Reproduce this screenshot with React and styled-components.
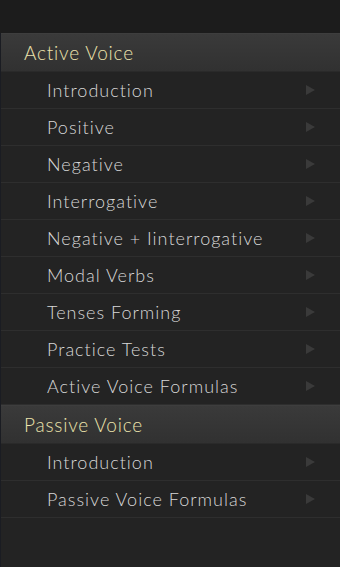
import React from "react";
import styled, { createGlobalStyle } from "styled-components";

const GlobalStyle = createGlobalStyle`
  html, body {
    margin: 0;
    padding: 0;
    background: #232323;
  }
  #root {
    min-height: 100vh;
  }
`;

const Page = styled.div`
  width: 340px;
  height: 567px;
  display: flex;
  flex-direction: column;
  background: #232323;
  overflow: hidden;
`;

const TopBar = styled.div`
  height: 33px;
  background: #1c1c1c;
  flex-shrink: 0;
`;

const Menu = styled.div`
  flex: 1;
  display: flex;
  flex-direction: column;
  border-left: 1px solid #1a1c22;
  background: #232323;
`;

const Header = styled.div`
  height: 39px;
  flex-shrink: 0;
  display: flex;
  align-items: center;
  padding-left: 23px;
  padding-bottom: 1px;
  box-sizing: border-box;
  background: linear-gradient(#3a3a3a, #313131);
  border-top: 1px solid #3e3e3e;
  border-bottom: 1px solid #2a2a2a;
  font-family: "Lato", "Noto Sans", sans-serif;
  font-weight: 300;
  font-size: 19px;
  letter-spacing: 0.8px;
  color: #ede4ad;
`;

const Row = styled.div`
  height: 37px;
  flex-shrink: 0;
  box-sizing: border-box;
  display: flex;
  align-items: center;
  justify-content: space-between;
  padding-left: 46px;
  padding-right: 25px;
  padding-bottom: 1px;
  border-bottom: 1px solid #2e2e2e;
  font-family: "Lato", "Noto Sans", sans-serif;
  font-weight: 300;
  font-size: 18px;
  letter-spacing: 1px;
  color: #d8d8d8;
`;

const Arrow = styled.span`
  width: 0;
  height: 0;
  border-top: 5px solid transparent;
  border-bottom: 5px solid transparent;
  border-left: 9px solid #3a3a3a;
`;

const sections = [
  {
    title: "Active Voice",
    items: [
      "Introduction",
      "Positive",
      "Negative",
      "Interrogative",
      "Negative + Iinterrogative",
      "Modal Verbs",
      "Tenses Forming",
      "Practice Tests",
      "Active Voice Formulas",
    ],
  },
  {
    title: "Passive Voice",
    items: ["Introduction", "Passive Voice Formulas"],
  },
];

export default function App() {
  return (
    <Page>
      <GlobalStyle />
      <TopBar />
      <Menu>
        {sections.map((s) => (
          <React.Fragment key={s.title}>
            <Header>{s.title}</Header>
            {s.items.map((item) => (
              <Row key={item}>
                <span>{item}</span>
                <Arrow />
              </Row>
            ))}
          </React.Fragment>
        ))}
      </Menu>
    </Page>
  );
}
